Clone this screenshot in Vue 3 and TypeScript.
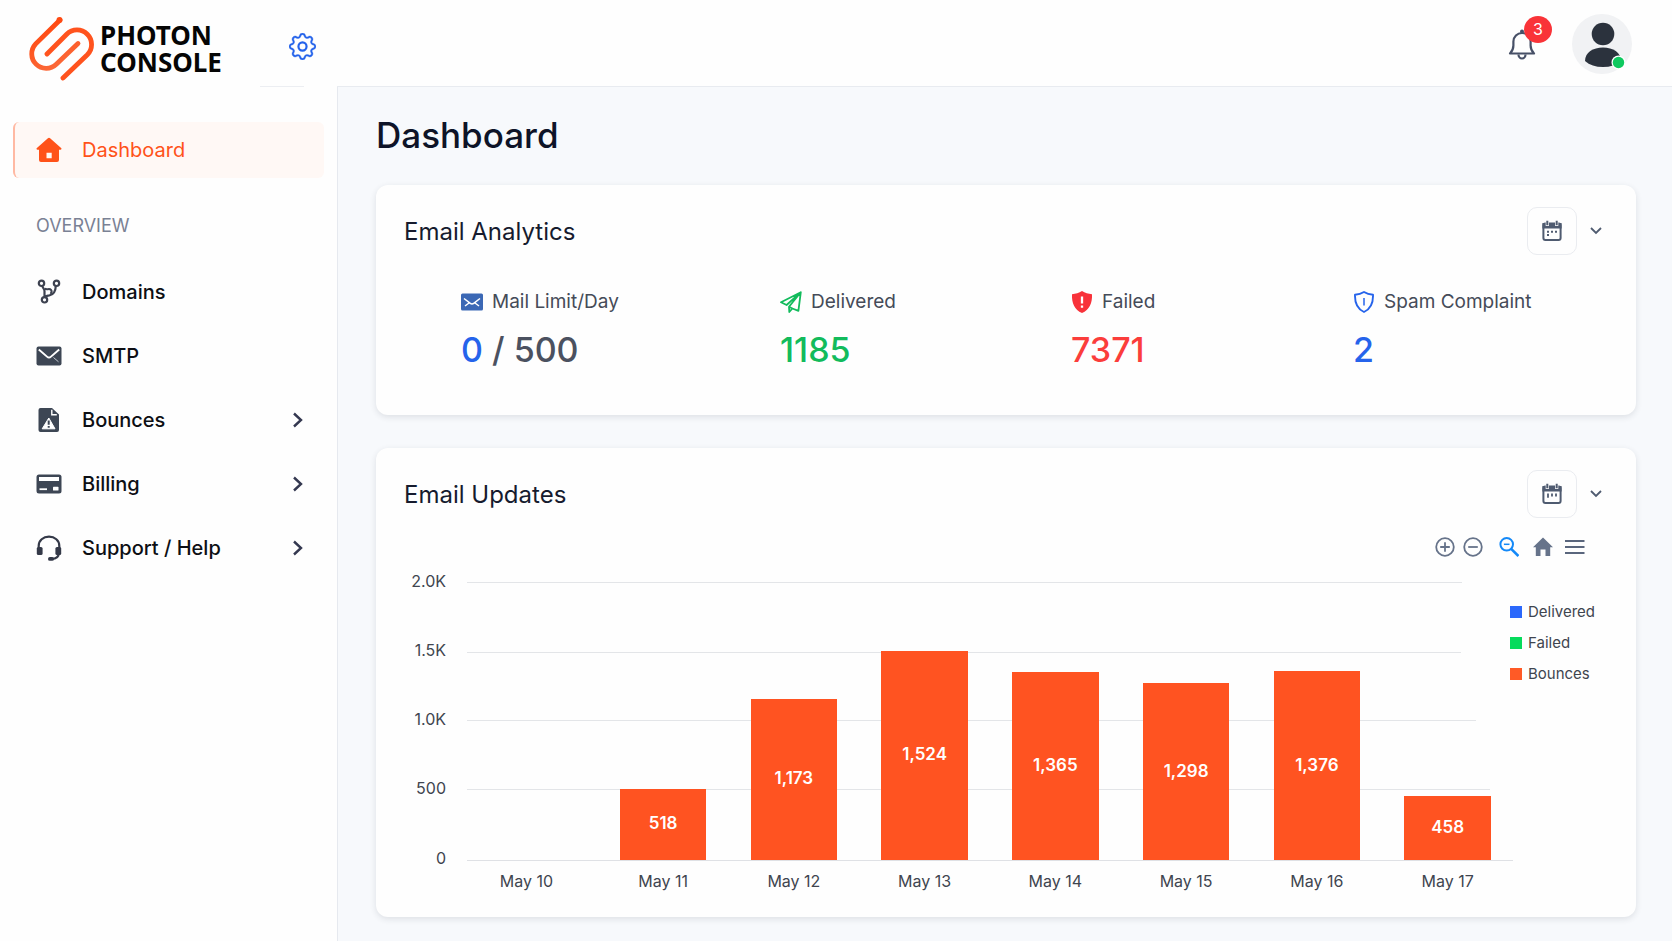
<script setup lang="ts">
interface NavItem {
  id: string
  label: string
  expandable: boolean
}

interface Day {
  label: string
  value: number
  level: number
}

const navItems: NavItem[] = [
  { id: 'domains', label: 'Domains', expandable: false },
  { id: 'smtp', label: 'SMTP', expandable: false },
  { id: 'bounces', label: 'Bounces', expandable: true },
  { id: 'billing', label: 'Billing', expandable: true },
  { id: 'support', label: 'Support / Help', expandable: true },
]

// level is the bar height as a percentage of the plot height
const days: Day[] = [
  { label: 'May 10', value: 0, level: 0 },
  { label: 'May 11', value: 518, level: 25.6 },
  { label: 'May 12', value: 1173, level: 58 },
  { label: 'May 13', value: 1524, level: 75.2 },
  { label: 'May 14', value: 1365, level: 67.6 },
  { label: 'May 15', value: 1298, level: 63.6 },
  { label: 'May 16', value: 1376, level: 67.9 },
  { label: 'May 17', value: 458, level: 23.2 },
]

// reach is the length of the grid line as a percentage of the plot width
const gridLines = [
  { label: '2.0K', reach: 95.1 },
  { label: '1.5K', reach: 95 },
  { label: '1.0K', reach: 96.5 },
  { label: '500', reach: 97.8 },
]

const legend = [
  { id: 'delivered', label: 'Delivered' },
  { id: 'failed', label: 'Failed' },
  { id: 'bounces', label: 'Bounces' },
]

const format = (n: number): string => n.toLocaleString('en-US')
</script>

<template>
  <div class="app">
    <header class="header">
      <div class="brand">
        <a class="logo" href="#" aria-label="Photon Console">
          <svg class="logo-mark" viewBox="28 16 67 65" fill="none" stroke-width="4.8" stroke-linecap="round">
            <defs>
              <linearGradient id="markA" x1="60" y1="20" x2="78" y2="60" gradientUnits="userSpaceOnUse">
                <stop offset="0" stop-color="#ff4a12" />
                <stop offset="1" stop-color="#fb6a3a" />
              </linearGradient>
            </defs>
            <path d="M60 20 35.7 43.9A14.5 14.5 0 0 0 56.3 64.3L78 43.5" stroke="url(#markA)" />
            <path d="M47 54 66.7 34.2A14.5 14.5 0 0 1 87.3 54.8L63 78" stroke="#ff531e" />
            <circle cx="59.5" cy="20" r="3" fill="#ff4a12" />
          </svg>
          <span class="logo-text"><span>PHOTON</span><span>CONSOLE</span></span>
        </a>
        <div class="settings-slot">
          <button class="plain" type="button" aria-label="Settings">
            <svg viewBox="0 0 16 16" width="27" height="27" fill="#2563eb" stroke="#2563eb" stroke-width=".2">
              <circle cx="8" cy="8" r="2.4" fill="none" stroke-width="1.3" />
              <path d="M9.796 1.343c-.527-1.79-3.065-1.79-3.592 0l-.094.319a.873.873 0 0 1-1.255.52l-.292-.16c-1.64-.892-3.433.902-2.54 2.541l.159.292a.873.873 0 0 1-.52 1.255l-.319.094c-1.79.527-1.79 3.065 0 3.592l.319.094a.873.873 0 0 1 .52 1.255l-.16.292c-.892 1.64.901 3.434 2.541 2.54l.292-.159a.873.873 0 0 1 1.255.52l.094.319c.527 1.79 3.065 1.79 3.592 0l.094-.319a.873.873 0 0 1 1.255-.52l.292.16c1.64.893 3.434-.902 2.54-2.541l-.159-.292a.873.873 0 0 1 .52-1.255l.319-.094c1.79-.527 1.79-3.065 0-3.592l-.319-.094a.873.873 0 0 1-.52-1.255l.16-.292c.893-1.64-.902-3.433-2.541-2.54l-.292.159a.873.873 0 0 1-1.255-.52l-.094-.319zm-2.633.283c.246-.835 1.428-.835 1.674 0l.094.319a1.873 1.873 0 0 0 2.693 1.115l.291-.16c.764-.415 1.6.42 1.184 1.185l-.159.292a1.873 1.873 0 0 0 1.116 2.692l.318.094c.835.246.835 1.428 0 1.674l-.319.094a1.873 1.873 0 0 0-1.115 2.693l.16.291c.415.764-.42 1.6-1.185 1.184l-.291-.159a1.873 1.873 0 0 0-2.693 1.116l-.094.318c-.246.835-1.428.835-1.674 0l-.094-.319a1.873 1.873 0 0 0-2.692-1.115l-.292.16c-.764.415-1.6-.42-1.184-1.185l.159-.291A1.873 1.873 0 0 0 1.945 8.93l-.319-.094c-.835-.246-.835-1.428 0-1.674l.319-.094A1.873 1.873 0 0 0 3.06 4.377l-.16-.292c-.415-.764.42-1.6 1.185-1.184l.292.159a1.873 1.873 0 0 0 2.692-1.115l.094-.319z" />
            </svg>
          </button>
        </div>
      </div>
      <div class="topbar">
        <button class="plain bell" type="button" aria-label="Notifications">
          <svg viewBox="0 0 28 32" width="28" height="32" fill="none" stroke="#475067" stroke-width="2.2" stroke-linejoin="round">
            <circle cx="14" cy="3.5" r="2" fill="#475067" stroke="none" />
            <path d="M2 25.5c2.4-2.4 3.4-4.6 3.4-8v-3.900a8.600 8.600 0 0 1 17.200 0v3.900c0 3.400 1 5.600 3.400 8z" />
            <path d="M10.500 26.500a3.500 4 0 0 0 7 0" />
          </svg>
          <span class="badge">3</span>
        </button>
        <button class="plain" type="button" aria-label="Account">
          <svg viewBox="0 0 60 60" width="60" height="60">
            <circle cx="30" cy="30" r="30" fill="#f1f2f4" />
            <circle cx="31" cy="20" r="11.300" fill="#2b323d" />
            <path d="M13 47c0-8.500 8-13.500 18-13.500S49 38.500 49 47c-4.500 4-10.500 6-18 6s-13.500-2-18-6z" fill="#2b323d" />
            <circle cx="46.500" cy="48.500" r="7" fill="#fff" />
            <circle cx="46.500" cy="48.500" r="5.700" fill="#0fc95f" />
          </svg>
        </button>
      </div>
    </header>

    <div class="body">
      <aside class="sidebar">
        <nav aria-label="Main">
          <a class="nav-link active" href="#dashboard" aria-current="page">
            <svg class="nav-icon" viewBox="0 0 26 26" fill="#ff5219">
              <path fill-rule="evenodd" d="M13 .8c.4 0 .8.200 1.100.4l11 9.900c.8.700.4 1.700-.6 1.700H23V23a2 2 0 0 1-2 2H5a2 2 0 0 1-2-2V12.800H1.500c-1 0-1.400-1-.6-1.700l11-9.900c.3-.2.7-.4 1.100-.4zM10.500 15.800v5.500h5.200v-5.500z" />
            </svg>
            <span>Dashboard</span>
          </a>
          <h2 class="nav-heading">OVERVIEW</h2>
          <a v-for="item in navItems" :key="item.id" class="nav-link" :href="'#' + item.id">
            <svg v-if="item.id === 'domains'" class="nav-icon" viewBox="0 0 26 26" fill="none" stroke="#3d4250" stroke-width="2.200">
              <circle cx="5.500" cy="4.300" r="2.700" />
              <circle cx="20.500" cy="4.300" r="2.700" />
              <circle cx="8.500" cy="20.800" r="2.700" />
              <path d="M6.300 7c.6 2.400 2.200 2.700 2.200 5v6M19.800 7c-.2 4.600-2 8.300-6 9.300-2.500.6-4.300.7-5.300 1.700" />
              <path d="M8.700 9.500c1.800 1.800 4.800-.5 6.300 1.300 1 1.200.4 3-.5 4" stroke-width="2" />
            </svg>
            <svg v-else-if="item.id === 'smtp'" class="nav-icon" viewBox="0 0 26 26">
              <rect x=".5" y="3.500" width="25" height="19" rx="2" fill="#3d4654" />
              <path d="M2.800 6.500 11 13.600a3 3 0 0 0 4 0l8.200-7.100" fill="none" stroke="#fff" stroke-width="1.900" />
              <path d="m17.500 14.500 5 4.300" fill="none" stroke="#c3c8d0" stroke-width="1" />
            </svg>
            <svg v-else-if="item.id === 'bounces'" class="nav-icon" viewBox="0 0 26 26">
              <path d="M4.500 1H16l7 6.500V23a2 2 0 0 1-2 2H4.500a2 2 0 0 1-2-2V3a2 2 0 0 1 2-2z" fill="#3d4654" />
              <path d="M15.800 2.800v4.900h5" fill="none" stroke="#fff" stroke-width="1.400" />
              <path d="M12.800 11 19 21.800H6.200z" fill="#fff" stroke="#fff" stroke-linejoin="round" />
              <path d="M12.700 13.500v4.300M12.700 19v1.700" stroke="#3d4654" stroke-width="2" />
            </svg>
            <svg v-else-if="item.id === 'billing'" class="nav-icon" viewBox="0 0 26 26">
              <rect x=".5" y="3.500" width="25" height="19" rx="2.500" fill="#3d4654" />
              <path d="M3 6h20v4H3z" fill="#fff" />
              <path d="M3.500 18.200h7.500" stroke="#fff" stroke-width="1.800" />
              <rect x="17" y="15.800" width="5.500" height="3.700" rx=".6" fill="#fff" />
            </svg>
            <svg v-else class="nav-icon" viewBox="0 0 26 26" fill="none" stroke="#343948" stroke-width="2.200">
              <path d="M2.700 14v-3C2.700 5.500 7.200 1.700 13 1.700S23.300 5.500 23.300 11v3" />
              <path d="M22.800 18c0 4-3.300 5.800-7.300 5.800" />
              <rect x=".8" y="12" width="5.800" height="8" rx="1.600" fill="#343948" stroke="none" />
              <rect x="19.400" y="12" width="5.800" height="8" rx="1.600" fill="#343948" stroke="none" />
              <rect x="12" y="22" width="6" height="3.800" rx="1.900" fill="#343948" stroke="none" />
            </svg>
            <span>{{ item.label }}</span>
            <svg v-if="item.expandable" class="nav-chevron" viewBox="0 0 12 16" fill="none" stroke="#343850" stroke-width="2.400">
              <path d="m2 1.500 7 6.500-7 6.500" />
            </svg>
          </a>
        </nav>
      </aside>

      <main class="main">
        <h1 class="page-title">Dashboard</h1>

        <section class="card analytics" aria-labelledby="analytics-title">
          <div class="card-head">
            <h2 id="analytics-title" class="card-title">Email Analytics</h2>
            <div class="card-actions">
              <button class="calendar" type="button" aria-label="Choose dates">
                <svg viewBox="0 0 20 22" width="20" height="22" fill="none" stroke="#4f5b70" stroke-width="2">
                  <rect x="1.400" y="3.500" width="17.200" height="16.600" rx="2" />
                  <path d="M1.400 4h17.200v3.500H1.400z" fill="#4f5b70" />
                  <path d="M5.300 1v5M14.700 1v5" stroke="#fff" stroke-width="3.200" />
                  <path d="M5.300.8v4.400M14.700.8v4.400" />
                  <path d="M5 11.800h2M9 11.800h2M13 11.800h2M5 15h2" />
                </svg>
              </button>
              <button class="plain" type="button" aria-label="More dates">
                <svg viewBox="0 0 12 8" width="12" height="8" fill="none" stroke="#4f5b70" stroke-width="1.800"><path d="m1 1 5 5 5-5" /></svg>
              </button>
            </div>
          </div>
          <dl class="stats">
            <div class="stat">
              <dt>
                <svg viewBox="0 0 22 22" width="22" height="22">
                  <rect y="2.500" width="22" height="17" rx="1.500" fill="#3b68b5" />
                  <path d="m3 7.500 6.300 4.800a2.800 2.800 0 0 0 3.400 0L19 7.500M4 15l4-3M18 15l-4-3" fill="none" stroke="#fff" stroke-width="1.500" />
                </svg>
                Mail Limit/Day
              </dt>
              <dd class="slate"><span class="blue">0</span> / 500</dd>
            </div>
            <div class="stat">
              <dt>
                <svg viewBox="0 0 22 22" width="22" height="22" fill="none" stroke="#12bb5c" stroke-width="1.800" stroke-linejoin="round">
                  <path d="M20.800 1.200 1 11.300l5.600 2.700L20.800 1.200l-2.400 18.600-6-2.300L9.300 21l-.3-5.200L20.800 1.200M12.400 17.500 9 15.800" />
                </svg>
                Delivered
              </dt>
              <dd class="green">1185</dd>
            </div>
            <div class="stat">
              <dt>
                <svg viewBox="0 0 22 22" width="22" height="22">
                  <path d="M11 0c3 2 6.300 2.900 10 3.200.4 9-2.600 15.600-10 18.800C3.600 18.800.6 12.200 1 3.200 4.700 2.900 8 2 11 0z" fill="#f8323a" />
                  <path d="M11 5.500v7M11 14.500v2.200" stroke="#fff" stroke-width="2.300" />
                </svg>
                Failed
              </dt>
              <dd class="red">7371</dd>
            </div>
            <div class="stat">
              <dt>
                <svg viewBox="0 0 22 22" width="22" height="22" fill="none" stroke="#2563eb" stroke-width="1.900" stroke-linejoin="round">
                  <path d="M11 1c2.800 1.700 5.700 2.500 9 2.800C20.300 12 17.600 18 11 21 4.400 18 1.700 12 2 3.800 5.300 3.500 8.200 2.700 11 1z" />
                  <path d="M11 7v7.500" stroke-width="1.500" />
                </svg>
                Spam Complaint
              </dt>
              <dd class="blue">2</dd>
            </div>
          </dl>
        </section>

        <section class="card updates" aria-labelledby="updates-title">
          <div class="card-head">
            <h2 id="updates-title" class="card-title">Email Updates</h2>
            <div class="card-actions">
              <button class="calendar" type="button" aria-label="Choose dates">
                <svg viewBox="0 0 20 22" width="20" height="22" fill="none" stroke="#4f5b70" stroke-width="2">
                  <rect x="1.400" y="3.500" width="17.200" height="16.600" rx="2" />
                  <path d="M1.400 4h17.200v3.500H1.400z" fill="#4f5b70" />
                  <path d="M5.300 1v5M14.700 1v5" stroke="#fff" stroke-width="3.200" />
                  <path d="M5.300.8v4.400M14.700.8v4.400" />
                  <path d="M6 10.500v4.200M10 10.500v3M14 10.500v3" stroke-width="1.800" />
                </svg>
              </button>
              <button class="plain" type="button" aria-label="More dates">
                <svg viewBox="0 0 12 8" width="12" height="8" fill="none" stroke="#4f5b70" stroke-width="1.800"><path d="m1 1 5 5 5-5" /></svg>
              </button>
            </div>
          </div>

          <div class="toolbar" role="toolbar" aria-label="Chart tools">
            <button class="plain" type="button" aria-label="Zoom in">
              <svg viewBox="0 0 20 20" width="20" height="20" fill="none" stroke="#66738a" stroke-width="1.800"><circle cx="10" cy="10" r="8.800" /><path d="M10 5.200v9.600M5.200 10h9.600" /></svg>
            </button>
            <button class="plain" type="button" aria-label="Zoom out">
              <svg viewBox="0 0 20 20" width="20" height="20" fill="none" stroke="#66738a" stroke-width="1.800"><circle cx="10" cy="10" r="8.800" /><path d="M5.200 10h9.600" /></svg>
            </button>
            <button class="plain lens" type="button" aria-label="Selection zoom">
              <svg viewBox="0 0 20 20" width="20" height="20" fill="none" stroke="#1489f8" stroke-width="2"><circle cx="7.700" cy="7.300" r="6.300" /><path d="M4.900 7.300h5.600" stroke-width="1.500" /><path d="m12.200 11.800 7.200 7.200" stroke-width="2.600" /></svg>
            </button>
            <button class="plain home" type="button" aria-label="Reset zoom">
              <svg viewBox="0 0 20 20" width="20" height="20" fill="#66738a"><path d="M10 .4 20 10.300h-2.800V19h-4.700v-6.500h-5V19H2.800v-8.700H0z" /></svg>
            </button>
            <button class="plain" type="button" aria-label="Chart menu">
              <svg viewBox="0 0 20 20" width="20" height="20" stroke="#5a667d" stroke-width="2"><path d="M0 4h19.500M0 10h19.500M0 16h19.500" /></svg>
            </button>
          </div>

          <div class="chart">
            <div class="y-axis">
              <span v-for="line in gridLines" :key="line.label">{{ line.label }}</span>
              <span>0</span>
            </div>
            <div class="plot-column">
              <div class="plot">
                <div class="grid" aria-hidden="true">
                  <div v-for="line in gridLines" :key="line.label" class="grid-line" :style="{ width: line.reach + '%' }"></div>
                </div>
                <div class="bars">
                  <div v-for="day in days" :key="day.label" class="slot">
                    <div v-if="day.value" class="bar" :style="{ height: day.level + '%' }">{{ format(day.value) }}</div>
                  </div>
                </div>
              </div>
              <div class="x-axis">
                <span v-for="day in days" :key="day.label">{{ day.label }}</span>
              </div>
            </div>
            <ul class="legend">
              <li v-for="entry in legend" :key="entry.id"><i :class="['swatch', entry.id]"></i>{{ entry.label }}</li>
            </ul>
          </div>
        </section>
      </main>
    </div>
  </div>
</template>

<style>
body {
  background: #f7f9fc;
}
</style>

<style scoped>
* {
  box-sizing: border-box;
}

.app {
  min-height: 100vh;
  display: flex;
  flex-direction: column;
  font-family: Inter, "Liberation Sans", sans-serif;
  color: #111827;
}

h1,
h2,
dl,
dd,
ul {
  margin: 0;
  padding: 0;
}

svg {
  display: block;
  flex: none;
}

.plain {
  padding: 0;
  border: 0;
  background: none;
  font: inherit;
  cursor: pointer;
}

.header {
  display: flex;
  height: 87px;
  background: #fefefe;
}

.brand {
  width: 337px;
  padding: 0 21px 0 28px;
  display: flex;
  justify-content: space-between;
  flex: none;
}

.logo {
  display: flex;
  align-items: center;
  gap: 5px;
  padding-top: 10px;
  color: #050505;
  text-decoration: none;
}

.logo-mark {
  width: 67px;
  height: 65px;
}

.logo-text {
  display: grid;
  font: 700 26px/27px "Noto Sans", sans-serif;
}

.settings-slot {
  width: 56px;
  display: flex;
  justify-content: flex-end;
  align-items: center;
  padding-top: 6px;
  background: linear-gradient(#eceef2, #eceef2) left bottom / 44px 1px no-repeat;
}

.topbar {
  flex: 1;
  display: flex;
  justify-content: flex-end;
  align-items: center;
  gap: 36px;
  padding: 2px 40px 0 0;
  border-bottom: 1px solid #e8ebf0;
}

.bell {
  position: relative;
}

.badge {
  position: absolute;
  left: 16px;
  top: -12px;
  width: 28px;
  height: 27px;
  border-radius: 50%;
  background: #f93338;
  color: #fff;
  font-size: 16px;
  line-height: 27px;
  text-align: center;
}

.body {
  flex: 1;
  display: flex;
}

.sidebar {
  width: 338px;
  flex: none;
  padding: 35px 13px;
  background: #fefefe;
  border-right: 1px solid #e6e9ef;
}

.nav-link {
  display: flex;
  align-items: center;
  gap: 20px;
  height: 56px;
  margin-bottom: 8px;
  padding: 0 20px 0 21px;
  border-left: 2px solid transparent;
  border-radius: 6px;
  color: #0d0f14;
  font-size: 20px;
  font-weight: 500;
  line-height: 24px;
  text-decoration: none;
}

.nav-link.active {
  background: #fff8f5;
  border-left-color: #ffb9a3;
  color: #ff5219;
  font-weight: 400;
  margin-bottom: 0;
}

.nav-icon {
  width: 26px;
  height: 26px;
}

.nav-chevron {
  width: 12px;
  height: 16px;
  margin-left: auto;
}

.nav-heading {
  padding: 36px 23px 26px;
  color: #7a8194;
  font-size: 18px;
  font-weight: 400;
  line-height: 24px;
}

.main {
  flex: 1;
  min-width: 0;
  padding: 26px 36px 23px 38px;
  background: #f7f9fc;
}

.page-title {
  margin-bottom: 28px;
  color: #0e1428;
  font-size: 35px;
  font-weight: 500;
  line-height: 44px;
}

.card {
  padding: 22px 34px 0 28px;
  border-radius: 12px;
  background: #fefefe;
  box-shadow: 0 2px 6px rgba(30, 41, 59, 0.12);
}

.analytics {
  margin-bottom: 33px;
  padding-bottom: 43px;
}

.updates {
  padding-bottom: 26px;
}

.card-head {
  display: flex;
  justify-content: space-between;
  align-items: center;
}

.card-title {
  padding-top: 2px;
  color: #161b2e;
  font-size: 24px;
  font-weight: 400;
  line-height: 32px;
}

.card-actions {
  display: flex;
  align-items: center;
  gap: 13px;
}

.calendar {
  display: grid;
  place-items: center;
  width: 50px;
  height: 48px;
  padding: 0;
  border: 1px solid #eaecf0;
  border-radius: 10px;
  background: #fefefe;
  cursor: pointer;
}

.stats {
  display: grid;
  grid-template-columns: 319fr 291fr 282fr 249fr;
  margin-top: 33px;
  padding-left: 57px;
}

.stat dt {
  display: flex;
  align-items: center;
  gap: 9px;
  color: #454b58;
  font-size: 19px;
  line-height: 28px;
  white-space: nowrap;
}

.stat dd {
  margin-top: 12px;
  font-size: 34px;
  font-weight: 500;
  line-height: 44px;
}

.slate {
  color: #4b5160;
}

.blue {
  color: #2563eb;
}

.green {
  color: #12bb5c;
}

.red {
  color: #fb3d3b;
}

.toolbar {
  display: flex;
  justify-content: flex-end;
  gap: 8px;
  margin-top: 19px;
  padding-right: 17px;
}

.lens {
  margin-left: 8px;
}

.home {
  margin: 0 4px 0 6px;
}

.chart {
  display: flex;
  margin-top: 14px;
  color: #40454f;
  font-size: 16px;
  line-height: 20px;
}

.y-axis {
  width: 42px;
  flex: none;
  display: grid;
  grid-template-rows: 69px 69px 69px 70px 20px;
  text-align: right;
}

.plot-column {
  flex: 1;
  min-width: 0;
  margin-left: 21px;
  padding-top: 11px;
}

.plot {
  display: grid;
  height: 279px;
  border-bottom: 1px solid #dfe1e5;
}

.grid,
.bars {
  grid-area: 1 / 1;
}

.grid {
  display: grid;
  grid-template-rows: 70px 68px 69px 71px;
}

.grid-line {
  border-top: 1px solid #e3e5e8;
}

.bars {
  display: grid;
  grid-template-columns: repeat(8, 1fr);
}

.slot {
  display: flex;
  align-items: flex-end;
  justify-content: center;
}

.bar {
  width: 66%;
  display: flex;
  align-items: center;
  justify-content: center;
  padding-bottom: 2px;
  background: #ff5321;
  color: #fff;
  font-size: 17px;
  font-weight: 600;
}

.x-axis {
  display: grid;
  grid-template-columns: repeat(8, 1fr);
  text-align: center;
}

.x-axis span {
  padding-top: 10px;
}

.x-axis span:first-child {
  padding-right: 12px;
}

.legend {
  width: 100px;
  flex: none;
  display: flex;
  flex-direction: column;
  gap: 11px;
  margin: 31px -8px 0 -3px;
  font-size: 15px;
  list-style: none;
}

.legend li {
  display: flex;
  align-items: center;
  gap: 6px;
}

.swatch {
  width: 12px;
  height: 12px;
}

.swatch.delivered {
  background: #2b68fb;
}

.swatch.failed {
  background: #06db5c;
}

.swatch.bounces {
  background: #ff5a26;
}
</style>
